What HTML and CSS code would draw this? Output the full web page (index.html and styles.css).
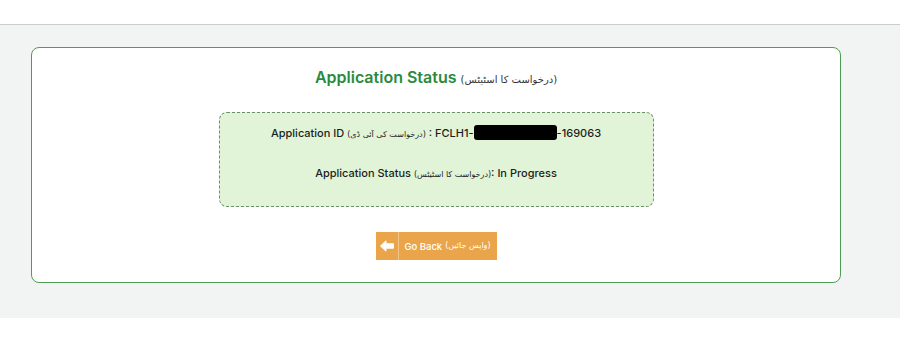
FILE: index.html
```html
<!DOCTYPE html>
<html lang="en">
<head>
<meta charset="utf-8">
<title>Application Status</title>
<link rel="stylesheet" href="styles.css">
</head>
<body>
<div class="topbar"></div>
<main class="page">
  <section class="card">
    <h2 class="title">Application Status <span class="ur" lang="ur" dir="rtl">(درخواست کا اسٹیٹس)</span></h2>
    <div class="status-box">
      <p class="row">Application ID <span class="ur" lang="ur" dir="rtl">(درخواست کی آئی ڈی)</span> : FCLH1-<span class="redact"></span>-169063</p>
      <p class="row">Application Status <span class="ur" lang="ur" dir="rtl">(درخواست کا اسٹیٹس)</span>: In Progress</p>
    </div>
    <div class="actions">
      <a class="back-btn" href="#">
        <span class="back-icon">
          <svg width="14" height="12" viewBox="0 0 14 12"><path d="M0.5 6 L6 0.8 V3.8 H13.5 V8.2 H6 V11.2 Z" fill="#fff" stroke="#fff" stroke-width="1" stroke-linejoin="round"/></svg>
        </span>
        <span class="back-text">Go Back <span class="ur" lang="ur" dir="rtl">(واپس جائیں)</span></span>
      </a>
    </div>
  </section>
</main>
</body>
</html>
```
FILE: styles.css
```css
* { box-sizing: border-box; }
html, body { margin: 0; padding: 0; background: #ffffff; }
body { font-family: "Inter", "Open Sans", "DejaVu Sans", sans-serif; color: #222; }
.topbar { height: 24px; background: #ffffff; }
.page {
  background: #f2f3f3;
  border-top: 1px solid #cbcdcb;
  padding: 22px 59px 35px 31px;
}
.card {
  background: #ffffff;
  border: 1px solid #4f9d55;
  border-radius: 8px;
  padding: 19px 0 22px;
  display: flex;
  flex-direction: column;
  align-items: center;
}
.title {
  margin: 0 0 25px;
  height: 20px;
  font-size: 16px;
  line-height: 20px;
  font-weight: 600;
  color: #2b8a3e;
}
.ur { font-family: "DejaVu Sans", sans-serif; unicode-bidi: isolate; line-height: 1; }
.title .ur { font-size: 10px; font-weight: 400; color: #333; }
.status-box {
  width: 435px;
  background: #e2f4d8;
  border: 1px dashed #6b8f66;
  border-radius: 8px;
  padding: 10px 0 23px;
  display: flex;
  flex-direction: column;
  align-items: center;
  gap: 20px;
}
.row {
  margin: 0;
  height: 20px;
  font-size: 11px;
  line-height: 20px;
  font-weight: 500;
  color: #1d1d1d;
}
.row .ur { font-size: 8px; font-weight: 400; }
.redact {
  display: inline-block;
  width: 83px;
  height: 15px;
  background: #000;
  vertical-align: -3px;
  border-radius: 3px;
}
.actions { margin-top: 25px; }
.back-btn {
  display: flex;
  align-items: stretch;
  height: 28px;
  width: 121px;
  background: #eaa54a;
  color: #fff;
  text-decoration: none;
  font-size: 9.5px;
  font-weight: 500;
}
.back-icon {
  width: 23px;
  display: flex;
  align-items: center;
  justify-content: center;
  border-right: 1px solid #f3c58a;
}
.back-text {
  flex: 1;
  display: flex;
  align-items: center;
  justify-content: center;
  gap: 3px;
}
.back-text .ur { font-size: 8px; }
```
